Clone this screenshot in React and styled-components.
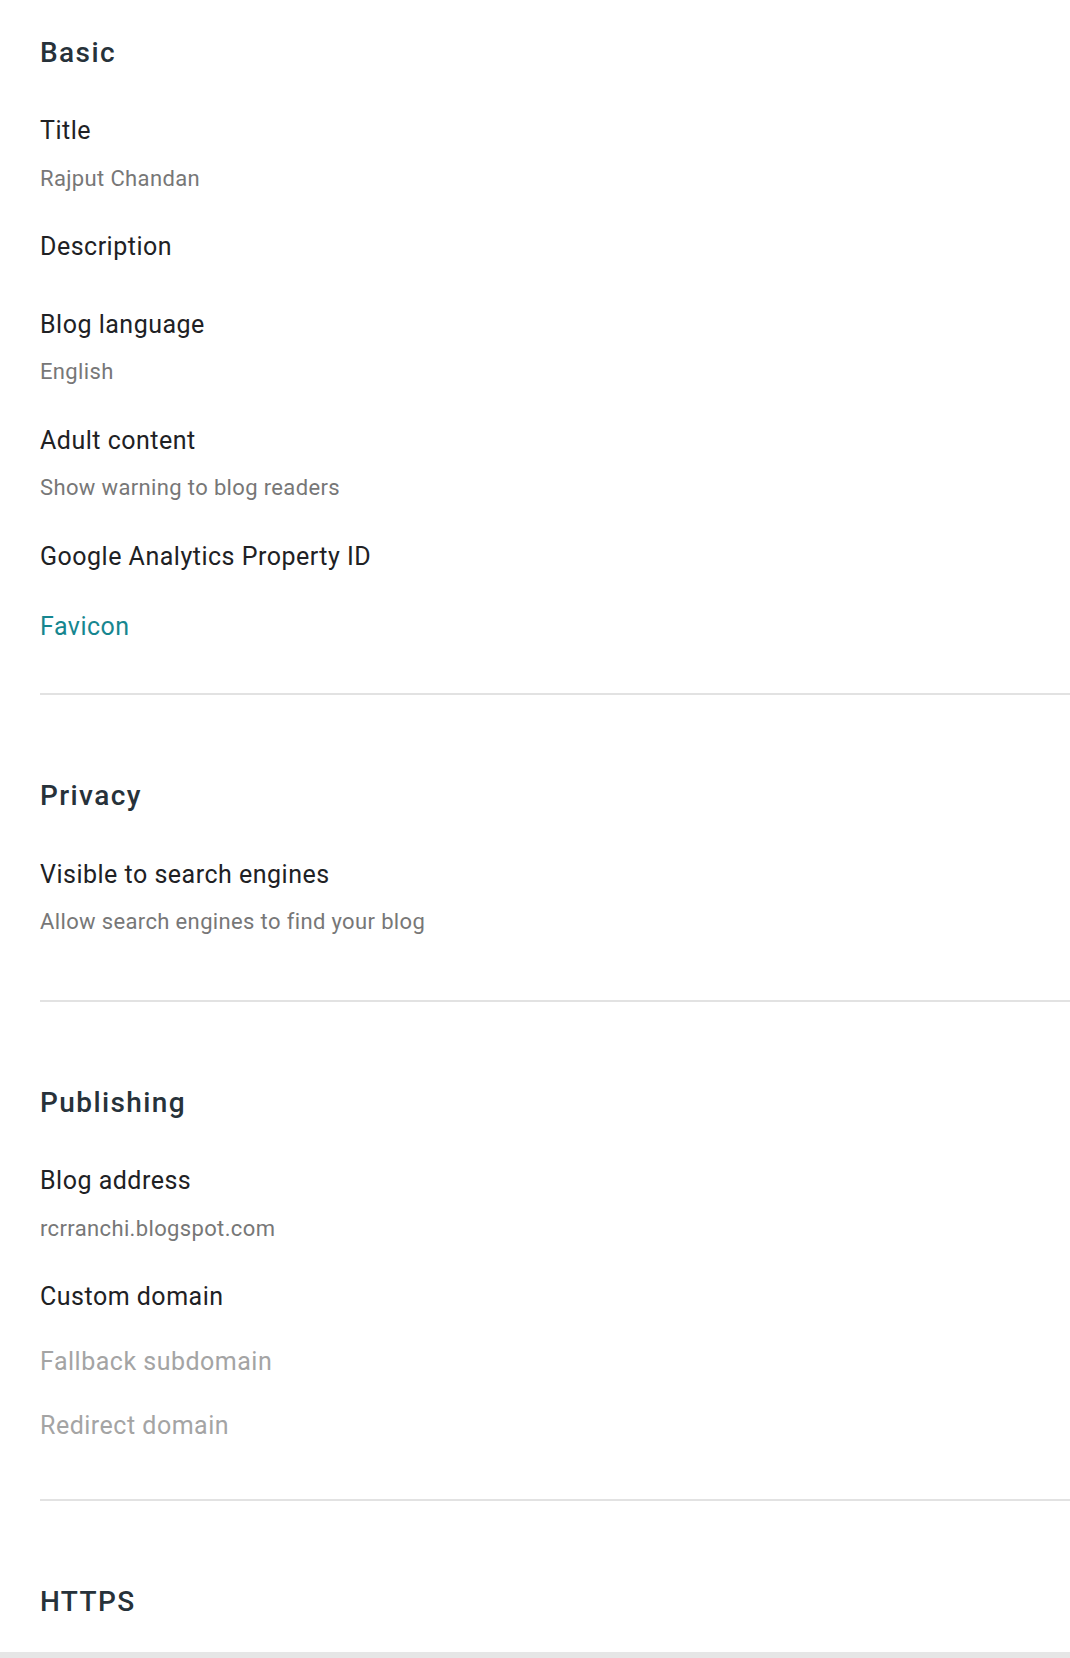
import React from "react";
import styled, { createGlobalStyle } from "styled-components";

const GlobalStyle = createGlobalStyle`
  html, body {
    margin: 0;
    padding: 0;
    background: #ffffff;
  }
  body {
    font-family: Roboto, "Noto Sans", "Liberation Sans", Arial, sans-serif;
    -webkit-font-smoothing: antialiased;
  }
  * { box-sizing: border-box; }
`;

const Page = styled.main`
  width: 100%;
  padding-left: 40px;
  background: #ffffff;
`;

const Section = styled.section`
  padding-top: 35px;
  padding-bottom: ${(p) => (p.$tail ? "7px" : "44.8px")};
`;

const Heading = styled.h2`
  margin: 0 0 24.75px 0;
  font-size: 28px;
  line-height: 36px;
  font-weight: 500;
  letter-spacing: 1.4px;
  color: #27323a;
`;

const Item = styled.div`
  display: flex;
  flex-direction: column;
  align-items: flex-start;
  min-height: 77.3px;
  padding: 17.6px 0 ${(p) => (p.$tight ? "10px" : "17.7px")} 0;
`;

const Label = styled.div`
  font-size: 25px;
  line-height: 36px;
  font-weight: 400;
  letter-spacing: 0.5px;
  color: ${(p) => (p.$disabled ? "#a4a4a4" : "#202124")};
  margin-top: ${(p) => (p.$disabled ? "28.6px" : "0")};
`;

const Sub = styled.div`
  margin-top: 14.7px;
  font-size: 22px;
  line-height: 30px;
  font-weight: 400;
  letter-spacing: 0.36px;
  color: #777777;
`;

const LinkItem = styled.a`
  display: block;
  padding: 10.3px 0 4px 0;
  font-size: 25px;
  line-height: 36px;
  letter-spacing: 0.5px;
  color: #16868f;
  text-decoration: none;
  cursor: pointer;
`;

const Divider = styled.hr`
  margin: 0 0 48px 0;
  border: none;
  height: 2px;
  background: #e2e2e2;
`;

const Band = styled.div`
  margin-left: -40px;
  height: 12px;
  background: #e6e6e6;
`;

const basic = [
  { label: "Title", sub: "Rajput Chandan" },
  { label: "Description" },
  { label: "Blog language", sub: "English" },
  { label: "Adult content", sub: "Show warning to blog readers" },
  { label: "Google Analytics Property ID" },
];

function Setting({ label, sub }) {
  return (
    <Item>
      <Label>{label}</Label>
      {sub && <Sub>{sub}</Sub>}
    </Item>
  );
}

export default function App() {
  return (
    <>
      <GlobalStyle />
      <Page>
        <Section>
          <Heading>Basic</Heading>
          {basic.map((s) => (
            <Setting key={s.label} {...s} />
          ))}
          <LinkItem>Favicon</LinkItem>
        </Section>
        <Divider />
        <Section>
          <Heading>Privacy</Heading>
          <Setting
            label="Visible to search engines"
            sub="Allow search engines to find your blog"
          />
        </Section>
        <Divider />
        <Section>
          <Heading>Publishing</Heading>
          <Setting label="Blog address" sub="rcrranchi.blogspot.com" />
          <Item $tight>
            <Label>Custom domain</Label>
            <Label $disabled>Fallback subdomain</Label>
            <Label $disabled>Redirect domain</Label>
          </Item>
        </Section>
        <Divider />
        <Section $tail>
          <Heading>HTTPS</Heading>
        </Section>
        <Band />
      </Page>
    </>
  );
}
